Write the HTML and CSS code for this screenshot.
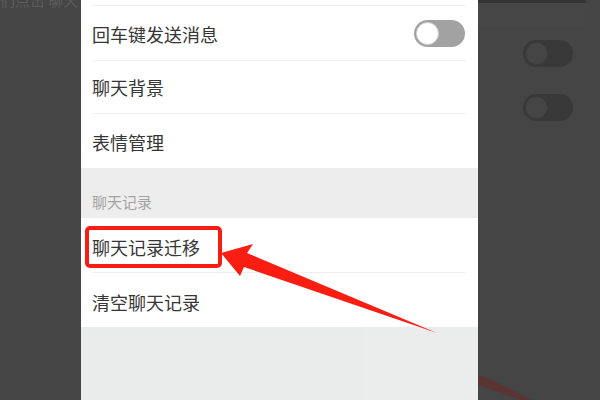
FILE: index.html
```html
<!DOCTYPE html>
<html lang="zh">
<head>
<meta charset="utf-8">
<link rel="stylesheet" href="styles.css">
</head>
<body>
<div class="screen">
  <div class="side-left">
    <div class="ghost-text">们点击 聊天记录</div>
  </div>
  <div class="panel">
    <div class="stub"></div>
    <div class="divider"></div>
    <div class="row row-a">
      <span class="label">回车键发送消息</span>
      <span class="toggle"><span class="knob"></span></span>
    </div>
    <div class="divider"></div>
    <div class="row row-b"><span class="label">聊天背景</span></div>
    <div class="divider"></div>
    <div class="row row-a"><span class="label">表情管理</span></div>
    <div class="section">聊天记录</div>
    <div class="row row-c"><span class="label">聊天记录迁移</span></div>
    <div class="divider"></div>
    <div class="row row-c"><span class="label">清空聊天记录</span></div>
    <div class="rest">
      <div class="rest-ghost"></div>
    </div>
  </div>
  <div class="side-right">
    <div class="top-bar"></div>
    <div class="top-shade"></div>
    <div class="dim-toggle t1"><span class="dim-knob"></span></div>
    <div class="dim-toggle t2"><span class="dim-knob"></span></div>
  </div>
  <svg class="annot" width="600" height="400" viewBox="0 0 600 400">
    <polygon points="478,376 486,377 532,400 521,400 478,385" fill="#5a3534"/>
    <rect x="87" y="228" width="133" height="38" rx="3" ry="3" fill="none" stroke="#f81c14" stroke-width="4"/>
    <polygon points="221,253 253,244 247,253 437,333 244,267 240,276" fill="#fa1d12"/>
  </svg>
</div>
</body>
</html>
```

FILE: styles.css
```css
* { box-sizing: border-box; }
html, body { margin: 0; padding: 0; }
body {
  width: 600px;
  height: 400px;
  overflow: hidden;
  background: #454545;
  font-family: "Noto Sans CJK SC", "Noto Sans", sans-serif;
}
.screen {
  position: relative;
  width: 600px;
  height: 400px;
  display: flex;
}
.side-left {
  width: 81px;
  height: 400px;
  overflow: hidden;
  background: #454545;
}
.ghost-text {
  margin-top: -9px;
  white-space: nowrap;
  font-size: 15px;
  line-height: 18px;
  color: #5e5e5e;
}
.panel {
  width: 397px;
  height: 400px;
  display: flex;
  flex-direction: column;
  background: #ffffff;
}
.stub { height: 5px; background: #ffffff; }
.divider {
  height: 1px;
  margin: 0 12px 0 11px;
  background: #efefef;
}
.row {
  display: flex;
  align-items: center;
  justify-content: space-between;
  padding: 0 13px 0 11px;
  background: #ffffff;
}
.row-a { height: 54px; padding-top: 1px; }
.row-b { height: 52px; }
.row-c { height: 54px; padding-top: 4px; }
.label {
  font-size: 18px;
  line-height: 24px;
  color: #363636;
}
.toggle {
  width: 51px;
  height: 27px;
  border-radius: 14px;
  background: #a2a2a2;
  display: flex;
  align-items: center;
  padding-left: 2px;
}
.knob {
  width: 23px;
  height: 23px;
  border-radius: 50%;
  background: #ffffff;
  border: 1px solid #cfcfcf;
}
.section {
  height: 50px;
  background: #ededed;
  display: flex;
  align-items: flex-end;
  padding: 0 0 6px 11px;
  font-size: 15px;
  line-height: 20px;
  color: #a3a3a3;
}
.rest {
  flex: 1;
  background: #eaebeb;
  display: flex;
  justify-content: flex-end;
}
.rest-ghost {
  width: 115px;
  background: #ebecec;
}
.side-right {
  width: 122px;
  height: 400px;
  background: #454545;
  display: flex;
  flex-direction: column;
}
.top-bar {
  width: 108px;
  height: 3px;
  background: #353535;
}
.top-shade {
  width: 108px;
  height: 22px;
  background: #474747;
}
.dim-toggle {
  width: 50px;
  height: 27px;
  margin-left: 45px;
  border-radius: 14px;
  background: #393939;
  display: flex;
  align-items: center;
  padding-left: 2px;
}
.t1 { margin-top: 15px; }
.t2 { margin-top: 27px; }
.dim-knob {
  width: 23px;
  height: 23px;
  border-radius: 50%;
  background: #454545;
  border: 1px solid #3c3c3c;
}
.annot {
  position: absolute;
  left: 0;
  top: 0;
  pointer-events: none;
}
```
